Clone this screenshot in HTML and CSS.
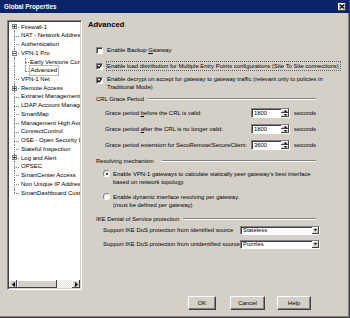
FILE: index.html
```html
<!DOCTYPE html>
<html>
<head>
<meta charset="utf-8">
<title>Global Properties</title>
<link rel="stylesheet" href="styles.css">
</head>
<body>
<div class="win">
  <div class="titlebar">
    <span class="title">Global Properties</span>
    <span class="close"><svg width="6" height="5" viewBox="0 0 6 5"><path d="M0.7 0.5L5.3 4.5M5.3 0.5L0.7 4.5" stroke="#000" stroke-width="1.1"/></svg></span>
  </div>
  <div class="main">
    <div class="tree">
      <div class="tree-list">
        <div class="row first"><span class="g1 stub"><svg class="exp" width="5" height="5" viewBox="0 0 5 5"><rect x=".5" y=".5" width="4" height="4" fill="#fff" stroke="#808080"/><path d="M1.2 2.5h2.6M2.5 1.2v2.6" stroke="#000" stroke-width=".8"/></svg></span><span class="lbl">Firewall-1</span></div>
        <div class="row"><span class="g1 stub"></span><span class="lbl">NAT - Network Address Translation</span></div>
        <div class="row"><span class="g1 stub"></span><span class="lbl">Authentication</span></div>
        <div class="row"><span class="g1 stub"><svg class="exp" width="5" height="5" viewBox="0 0 5 5"><rect x=".5" y=".5" width="4" height="4" fill="#fff" stroke="#808080"/><path d="M1.2 2.5h2.6" stroke="#000" stroke-width=".8"/></svg></span><span class="lbl">VPN-1 Pro</span></div>
        <div class="row"><span class="g1"></span><span class="g2"></span><span class="lbl child">Early Versions Compatibility</span></div>
        <div class="row"><span class="g1"></span><span class="g2 lastchild"></span><span class="lbl child sel">Advanced</span></div>
        <div class="row"><span class="g1 stub"></span><span class="lbl">VPN-1 Net</span></div>
        <div class="row"><span class="g1 stub"><svg class="exp" width="5" height="5" viewBox="0 0 5 5"><rect x=".5" y=".5" width="4" height="4" fill="#fff" stroke="#808080"/><path d="M1.2 2.5h2.6M2.5 1.2v2.6" stroke="#000" stroke-width=".8"/></svg></span><span class="lbl">Remote Access</span></div>
        <div class="row"><span class="g1 stub"></span><span class="lbl">Extranet Management Interface</span></div>
        <div class="row"><span class="g1 stub"></span><span class="lbl">LDAP Account Management</span></div>
        <div class="row"><span class="g1 stub"></span><span class="lbl">SmartMap</span></div>
        <div class="row"><span class="g1 stub"></span><span class="lbl">Management High Availability</span></div>
        <div class="row"><span class="g1 stub"></span><span class="lbl">ConnectControl</span></div>
        <div class="row"><span class="g1 stub"></span><span class="lbl">OSE - Open Security Extension</span></div>
        <div class="row"><span class="g1 stub"></span><span class="lbl">Stateful Inspection</span></div>
        <div class="row"><span class="g1 stub"><svg class="exp" width="5" height="5" viewBox="0 0 5 5"><rect x=".5" y=".5" width="4" height="4" fill="#fff" stroke="#808080"/><path d="M1.2 2.5h2.6M2.5 1.2v2.6" stroke="#000" stroke-width=".8"/></svg></span><span class="lbl">Log and Alert</span></div>
        <div class="row"><span class="g1 stub"></span><span class="lbl">OPSEC</span></div>
        <div class="row"><span class="g1 stub"></span><span class="lbl">SmartCenter Access</span></div>
        <div class="row"><span class="g1 stub"></span><span class="lbl">Non Unique IP Address Ranges</span></div>
        <div class="row last"><span class="g1 stub"></span><span class="lbl">SmartDashboard Customization</span></div>
      </div>
      <div class="hscroll">
        <span class="sb-btn"><svg width="3" height="5" viewBox="0 0 3 5"><path d="M3 0L0 2.5L3 5z" fill="#000"/></svg></span>
        <span class="sb-thumb"></span>
        <span class="sb-track"></span>
        <span class="sb-btn"><svg width="3" height="5" viewBox="0 0 3 5"><path d="M0 0L3 2.5L0 5z" fill="#000"/></svg></span>
      </div>
    </div>

    <div class="content">
      <div class="heading">Advanced</div>

      <div class="check ck1"><span class="box"></span><span class="txt">Enable Backup <u>G</u>ateway</span></div>
      <div class="check ck2"><span class="box"><svg width="5" height="5" viewBox="0 0 5 5"><path d="M0.6 2.4L2 3.8L4.4 1" fill="none" stroke="#000" stroke-width="1.2"/></svg></span><span class="txt focus">Enable load distribution for Multiple Entry Points configurations (Site To Site connections)</span></div>
      <div class="check ck3"><span class="box"><svg width="5" height="5" viewBox="0 0 5 5"><path d="M0.6 2.4L2 3.8L4.4 1" fill="none" stroke="#000" stroke-width="1.2"/></svg></span><span class="txt">Enable decrypt on accept for gateway to gateway traffic (relevant only to policies in<br>Traditional Mode)</span></div>

      <div class="sec sec-crl"><span class="sec-lbl">CRL Grace Period</span><span class="sec-line"></span></div>

      <div class="grace g-1"><span class="glbl">Grace period <u>b</u>efore the CRL is valid:</span><span class="spin"><span class="val">1800</span><span class="arrows"><span><svg width="3" height="2" viewBox="0 0 3 2"><path d="M0 2L1.5 0L3 2z" fill="#000"/></svg></span><span><svg width="3" height="2" viewBox="0 0 3 2"><path d="M0 0L1.5 2L3 0z" fill="#000"/></svg></span></span></span><span class="secs">seconds</span></div>
      <div class="grace g-2"><span class="glbl">Grace period <u>a</u>fter the CRL is no longer valid:</span><span class="spin"><span class="val">1800</span><span class="arrows"><span><svg width="3" height="2" viewBox="0 0 3 2"><path d="M0 2L1.5 0L3 2z" fill="#000"/></svg></span><span><svg width="3" height="2" viewBox="0 0 3 2"><path d="M0 0L1.5 2L3 0z" fill="#000"/></svg></span></span></span><span class="secs">seconds</span></div>
      <div class="grace g-3"><span class="glbl">Grace period extension for SecuRemote/SecureClient:</span><span class="spin"><span class="val">3600</span><span class="arrows"><span><svg width="3" height="2" viewBox="0 0 3 2"><path d="M0 2L1.5 0L3 2z" fill="#000"/></svg></span><span><svg width="3" height="2" viewBox="0 0 3 2"><path d="M0 0L1.5 2L3 0z" fill="#000"/></svg></span></span></span><span class="secs">seconds</span></div>

      <div class="sec sec-res"><span class="sec-lbl">Resolving mechanism</span><span class="sec-line"></span></div>

      <div class="radio r-1"><span class="rb on"></span><span class="txt">Enable VPN-1 gateways to calculate statically peer gateway's best interface<br>based on network topology.</span></div>
      <div class="radio r-2"><span class="rb"></span><span class="txt">Enable dynamic interface resolving per gateway.<br>(must be defined per gateway)</span></div>

      <div class="sec sec-ike"><span class="sec-lbl">IKE Denial of Service protection</span><span class="sec-line"></span></div>

      <div class="ike ike-1"><span class="ilbl">Support IKE DoS protection from identified source</span><span class="select"><span class="val">Stateless</span><span class="dd"><svg width="3" height="2" viewBox="0 0 3 2"><path d="M0 0L1.5 2L3 0z" fill="#000"/></svg></span></span></div>
      <div class="ike ike-2"><span class="ilbl">Support IKE DoS protection from unidentified source</span><span class="select"><span class="val">Puzzles</span><span class="dd"><svg width="3" height="2" viewBox="0 0 3 2"><path d="M0 0L1.5 2L3 0z" fill="#000"/></svg></span></span></div>
    </div>
  </div>

  <div class="footer">
    <span class="btn btn-ok">OK</span>
    <span class="btn btn-cancel">Cancel</span>
    <span class="btn btn-help">Help</span>
  </div>
</div>
</body>
</html>
```

FILE: styles.css
```css
* { box-sizing: border-box; margin: 0; padding: 0; }
body { margin: 0; background: #d4d0c8; font-family: "Liberation Sans", Arial, sans-serif; color: #000; }
u { text-decoration: underline; text-underline-offset: 1px; }

.win {
  width: 350px; height: 318px; background: #d4d0c8;
  display: flex; flex-direction: column;
  border-right: 1px solid #404040; border-bottom: 1px solid #404040;
  box-shadow: inset -1px -1px #808080;
  overflow: hidden;
}

.titlebar {
  height: 13px; flex: none; background: #0a246a;
  display: flex; align-items: center; padding: 0 3px 0 4px;
}
.title { flex: 1; color: #fff; font-weight: bold; font-size: 6.3px; line-height: 13px; }
.close {
  width: 8px; height: 8px; background: #d4d0c8;
  box-shadow: inset -1px -1px #404040, inset 1px 1px #fff;
  display: flex; align-items: center; justify-content: center;
}

.main { display: flex; flex: none; padding: 7px 0 0 7px; }

/* tree */
.tree {
  width: 75px; height: 270px; flex: none; background: #fff;
  border: 1px solid; border-color: #808080 #fff #fff #808080;
  box-shadow: inset 1px 1px #404040, inset -1px -1px #d4d0c8;
  padding: 1px; display: flex; flex-direction: column;
}
.tree-list { flex: 1; overflow: hidden; padding-top: 0.6px; font-size: 6px; }
.row { display: flex; align-items: center; height: 8.74px; line-height: 8.74px; white-space: nowrap; }
.g1, .g2 { width: 10px; height: 100%; flex: none; position: relative; }
.g1::before { content: ""; position: absolute; left: 5px; top: 0; bottom: 0; border-left: 1px dotted #808080; }
.row.first .g1::before { top: 50%; }
.row.last .g1::before { bottom: 50%; }
.g1.stub::after { content: ""; position: absolute; left: 5px; width: 5px; top: 50%; border-top: 1px dotted #808080; }
.g2::before { content: ""; position: absolute; left: 6px; top: 0; bottom: 0; border-left: 1px dotted #808080; }
.g2.lastchild::before { bottom: 50%; }
.g2::after { content: ""; position: absolute; left: 6px; width: 4px; top: 50%; border-top: 1px dotted #808080; }
.exp { position: absolute; left: 3px; top: 50%; margin-top: -2.5px; z-index: 1; display: block; }
.lbl { margin-left: 2px; }
.lbl.child { margin-left: 1px; }
.lbl.sel { outline: 1px solid #b8b8b8; outline-offset: -0.5px; padding: 0 0.5px; }

.hscroll { height: 8px; flex: none; display: flex; }
.sb-btn {
  width: 8px; flex: none; background: #d4d0c8;
  box-shadow: inset -1px -1px #404040, inset 1px 1px #fff;
  display: flex; align-items: center; justify-content: center;
}
.sb-thumb { width: 40px; flex: none; background: #d4d0c8; box-shadow: inset -1px -1px #404040, inset 1px 1px #fff; }
.sb-track { flex: 1; background: repeating-conic-gradient(#fff 0 25%, #e4e1dc 0 50%) 0 0 / 2px 2px; }

/* content */
.content { margin-left: 6px; width: 258px; display: flex; flex-direction: column; font-size: 5.9px; line-height: 8px; }
.heading { font-weight: bold; font-size: 7.6px; line-height: 10px; height: 10px; }

.check { display: flex; align-items: flex-start; margin-left: 8px; }
.ck1 { margin-top: 16px; }
.ck2 { margin-top: 8px; }
.ck3 { margin-top: 6px; line-height: 7.8px; }
.box {
  width: 7px; height: 7px; flex: none; margin-top: 0.5px; background: #fff;
  border: 1px solid; border-color: #808080 #fff #fff #808080;
  box-shadow: inset 1px 1px #404040;
  display: flex; align-items: center; justify-content: center;
}
.check .txt { margin-left: 4px; white-space: nowrap; }
.focus { outline: 1px dotted #606060; outline-offset: 0; padding-right: 1px; }

.sec { display: flex; align-items: center; margin-left: 8px; width: 220px; height: 8px; }
.sec-lbl { flex: none; white-space: nowrap; }
.sec-line { flex: 1; height: 2px; border-top: 1px solid #808080; border-bottom: 1px solid #fff; }
.sec-crl { margin-top: 3.4px; }
.sec-crl .sec-lbl { width: 52px; }
.sec-res { margin-top: 7px; }
.sec-res .sec-lbl { width: 66px; }
.sec-ike { margin-top: 6px; }
.sec-ike .sec-lbl { width: 87px; }

.grace { display: flex; align-items: center; margin-left: 17px; height: 10px; margin-top: 6px; }
.sec-crl + .grace { margin-top: 5px; }
.glbl { width: 146px; flex: none; white-space: nowrap; }
.spin {
  width: 39px; height: 10px; flex: none; display: flex; background: #fff;
  border: 1px solid; border-color: #808080 #fff #fff #808080;
  box-shadow: inset 1px 1px #404040;
}
.spin .val { flex: 1; padding-left: 2px; line-height: 8px; }
.arrows { width: 8px; display: flex; flex-direction: column; }
.arrows span {
  flex: 1; background: #d4d0c8;
  box-shadow: inset -1px -1px #404040, inset 1px 1px #fff;
  display: flex; align-items: center; justify-content: center;
}
.secs { margin-left: 4px; }

.radio { display: flex; align-items: flex-start; margin-left: 15px; }
.r-1 { margin-top: 5px; }
.r-2 { margin-top: 7px; }
.rb {
  width: 7px; height: 7px; flex: none; margin-top: 0.5px; border-radius: 50%; background: #fff;
  border: 1px solid; border-color: #808080 #fff #fff #808080; position: relative;
}
.rb.on::after { content: ""; position: absolute; left: 1.5px; top: 1.5px; width: 2px; height: 2px; border-radius: 50%; background: #000; }
.radio .txt { margin-left: 3px; white-space: nowrap; }

.ike { display: flex; align-items: center; margin-left: 15px; height: 9px; }
.ike-1 { margin-top: 3px; }
.ike-2 { margin-top: 5px; }
.ilbl { width: 137px; flex: none; white-space: nowrap; }
.select {
  width: 80px; height: 9px; flex: none; display: flex; background: #fff;
  border: 1px solid; border-color: #808080 #fff #fff #808080;
  box-shadow: inset 1px 1px #404040;
}
.select .val { flex: 1; padding-left: 2px; line-height: 7px; }
.dd {
  width: 7px; flex: none; background: #d4d0c8;
  box-shadow: inset -1px -1px #404040, inset 1px 1px #fff;
  display: flex; align-items: center; justify-content: center;
}

/* footer */
.footer { display: flex; justify-content: flex-end; margin-top: 6px; padding-right: 38px; flex: none; }
.btn {
  height: 14px; display: flex; align-items: center; justify-content: center;
  font-size: 6px; background: #d4d0c8;
  border: 1px solid; border-color: #fff #404040 #404040 #fff;
  box-shadow: inset -1px -1px #808080;
}
.btn-ok { width: 28px; }
.btn-cancel { width: 35px; margin-left: 14px; }
.btn-help { width: 34px; margin-left: 12px; }
```
